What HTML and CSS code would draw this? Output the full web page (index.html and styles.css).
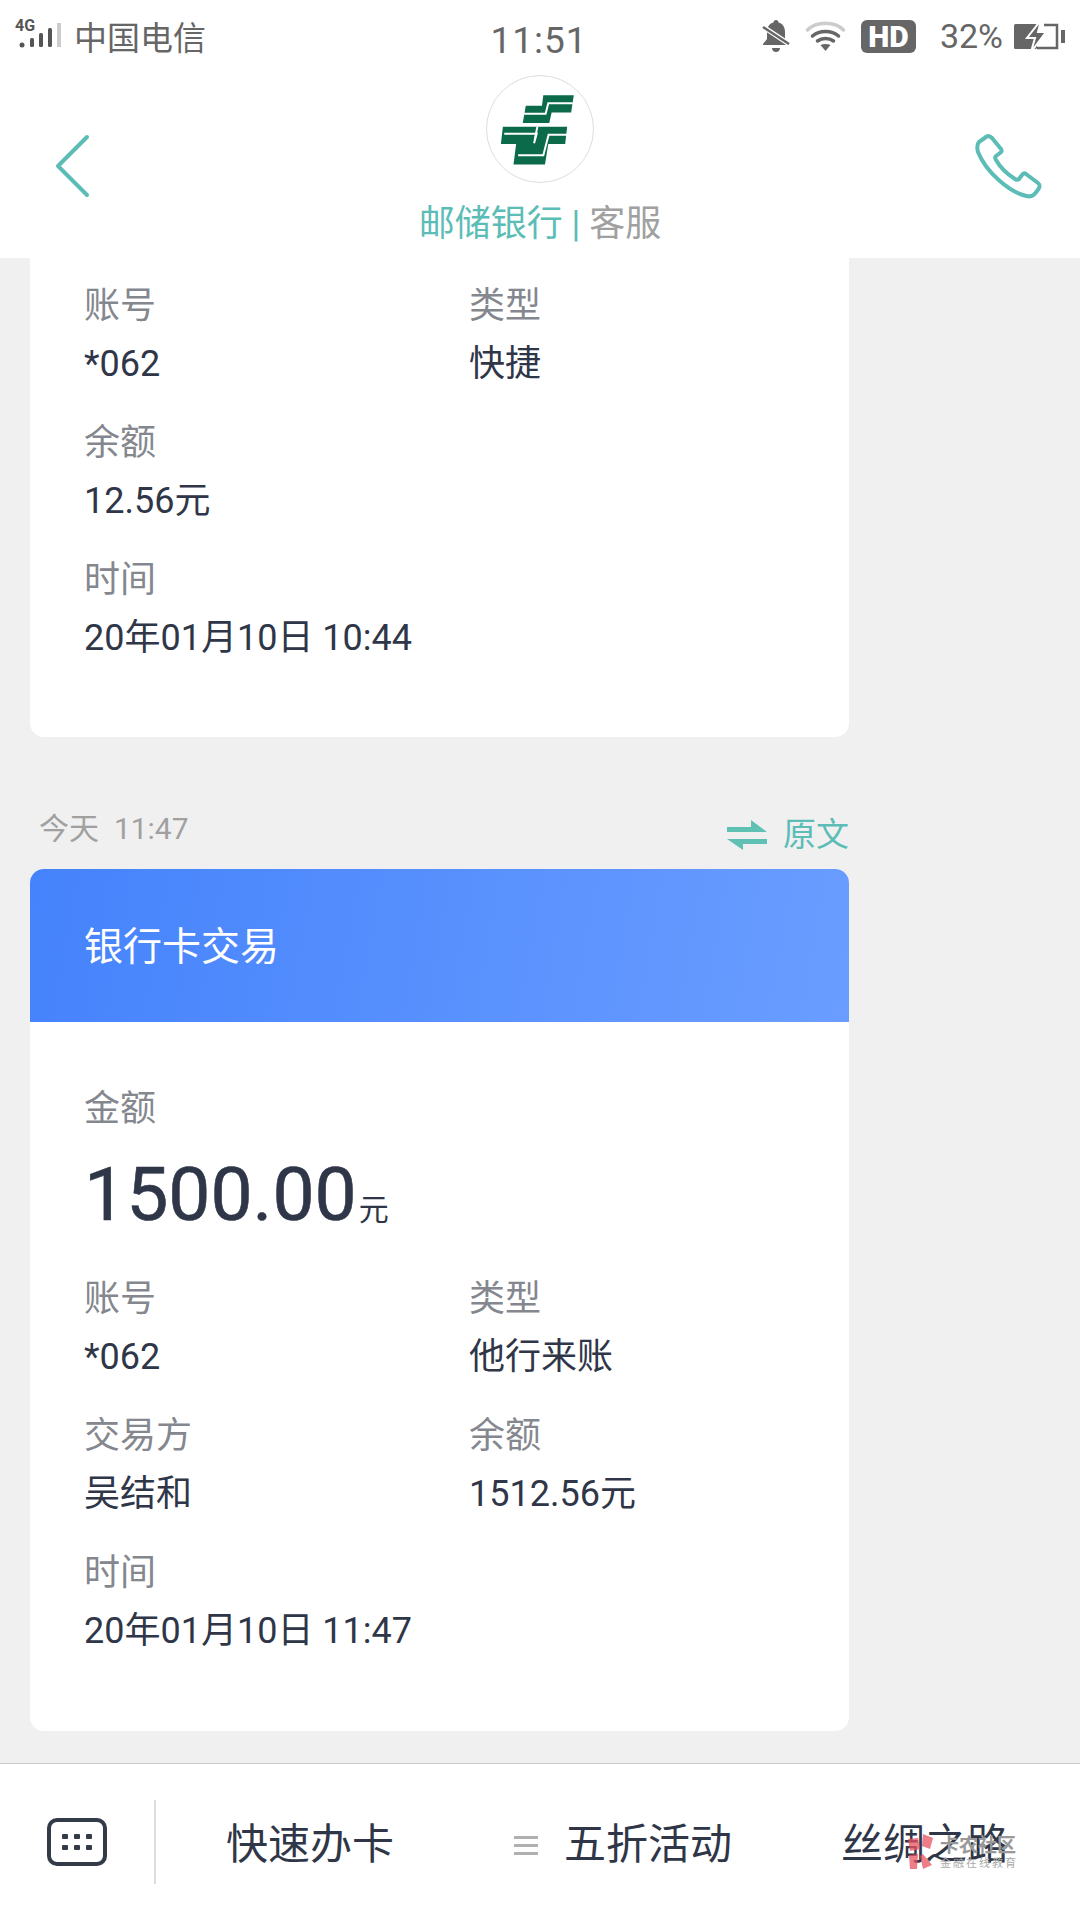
FILE: index.html
```html
<!DOCTYPE HTML>
<html>
<head>
  <meta name="viewport" content="width=device-width, initial-scale=1">
  <title>邮储银行 客服</title>
  <link rel="stylesheet" href="styles.css">
</head>
<body>
  <div class="status-bar">
    <div class="status-left">
      <div class="signal">
        <span class="signal-tag">4G</span>
        <svg width="48" height="30" viewBox="0 0 48 30">
          <circle cx="8" cy="24" r="2.500" fill="#555"/>
          <rect x="16" y="17" width="4" height="9" rx="1.500" fill="#555"/>
          <rect x="25" y="12" width="4" height="14" rx="1.500" fill="#555"/>
          <rect x="34" y="7" width="4" height="19" rx="1.500" fill="#555"/>
          <rect x="43" y="2" width="4" height="24" fill="#ccc"/>
        </svg>
      </div>
      <span class="carrier">中国电信</span>
    </div>
    <div class="clock">11:51</div>
    <div class="status-right">
      <svg class="bell" width="28" height="34" viewBox="0 0 28 34">
        <path d="M14 1c1.500 0 2.500 1 2.500 2.500 4.500 1.200 6.500 4.800 6.500 9.500v7l4 5v1H1v-1l4-5v-7c0-4.700 2-8.300 6.500-9.500C11.500 2 12.500 1 14 1z" fill="#666"/>
        <path d="M10 29h8c0 2.500-1.800 4-4 4s-4-1.500-4-4z" fill="#666"/>
        <path d="M0 7l27 18" stroke="#fff" stroke-width="5"/>
        <path d="M1 8l26 17" stroke="#666" stroke-width="2.500"/>
      </svg>
      <svg class="wifi" width="41" height="32" viewBox="0 0 40 32">
        <path d="M2 10C11 1 29 1 38 10" stroke="#ccc" stroke-width="3.500" fill="none" stroke-linecap="round"/>
        <path d="M7 16c7-6 19-6 26 0" stroke="#666" stroke-width="3.500" fill="none" stroke-linecap="round"/>
        <path d="M12 21c4.500-3.500 11.500-3.500 16 0" stroke="#666" stroke-width="3.500" fill="none" stroke-linecap="round"/>
        <path d="M15 25c3-1.500 7-1.500 10 0l-5 6z" fill="#666"/>
      </svg>
      <span class="hd">HD</span>
      <span class="battery-pct">32%</span>
      <svg class="battery" width="52" height="32" viewBox="0 0 52 32">
        <rect x="0" y="4" width="23" height="25" rx="1.500" fill="#666"/>
        <path d="M27 0L13 18h8l-4 14 15-20h-8z" fill="#666" stroke="#fff" stroke-width="2"/>
        <path d="M30 5h13v23H23" stroke="#666" stroke-width="2.500" fill="none"/>
        <rect x="47" y="10" width="4" height="13" fill="#666"/>
      </svg>
    </div>
  </div>

  <div class="top-bar">
    <svg class="back" width="36" height="64" viewBox="0 0 36 64">
      <path d="M33 3L4 32l29 29" stroke="#5bbdb6" stroke-width="4" fill="none" stroke-linecap="round" stroke-linejoin="round"/>
    </svg>
    <div class="account">
      <div class="logo">
        <svg width="106" height="106" viewBox="20 15 320 320">
          <path d="M190 73H282L274 125H215L208 157H128L137 105H186z" fill="#0a6a4a"/>
          <path d="M68 168H262L256 220H205L195 282H100L108 220H62z" fill="#0a6a4a"/>
          <g stroke="#fff" stroke-width="6" fill="none">
            <path d="M279 97H205L197 129H132"/>
            <path d="M262 192H206L190 254H114"/>
            <path d="M72 189H170L162 218"/>
            <path d="M172 168L164 208"/>
          </g>
        </svg>
      </div>
      <div class="account-name"><span class="bank">邮储银行 | </span>客服</div>
    </div>
    <svg class="phone" width="68" height="70" viewBox="0 0 68 70">
      <path d="M12 3c2-1.500 4-1 6 1l9 11c1 1.500 1 3-1 4l-4 3c-1 1-1 2.500 0 4 4 7 11 14 19 19 1.500 1 3 1 4 0l3-4c1-1.500 2.500-2 4-1l12 9c2 1.500 2 4 .5 6l-3 4c-2 3-5 4-9 3C35 58 12 38 4 18 3 14 3 10 5 8z" stroke="#5bbdb6" stroke-width="4" fill="none" stroke-linejoin="round"/>
    </svg>
  </div>

  <div class="feed">
    <div class="card first">
      <div class="fields">
        <div class="field"><div class="label">账号</div><div class="value">*062</div></div>
        <div class="field"><div class="label">类型</div><div class="value">快捷</div></div>
        <div class="field"><div class="label">余额</div><div class="value">12.56元</div></div>
        <div class="field"></div>
        <div class="field wide"><div class="label">时间</div><div class="value">20年01月10日 10:44</div></div>
      </div>
    </div>

    <div class="meta">
      <span class="when">今天&nbsp;&nbsp;11:47</span>
      <span class="origin">
        <svg width="40" height="30" viewBox="0 0 40 30">
          <path d="M0 7h24V0l16 12H0zM0 19h40v5H16v6z" fill="#5fc0b4"/>
        </svg>
        原文
      </span>
    </div>

    <div class="card">
      <div class="card-head">银行卡交易</div>
      <div class="card-body">
        <div class="label">金额</div>
        <div class="amount">1500.00<span class="unit">元</span></div>
        <div class="fields">
          <div class="field"><div class="label">账号</div><div class="value">*062</div></div>
          <div class="field"><div class="label">类型</div><div class="value">他行来账</div></div>
          <div class="field"><div class="label">交易方</div><div class="value">吴结和</div></div>
          <div class="field"><div class="label">余额</div><div class="value">1512.56元</div></div>
          <div class="field wide"><div class="label">时间</div><div class="value">20年01月10日 11:47</div></div>
        </div>
      </div>
    </div>
  </div>

  <div class="bottom-bar">
    <div class="keyboard">
      <svg width="60" height="48" viewBox="0 0 60 48">
        <rect x="2" y="2" width="56" height="44" rx="8" stroke="#333a48" stroke-width="4" fill="none"/>
        <g fill="#333a48">
          <rect x="15" y="16" width="6" height="5" rx="1"/><rect x="27" y="16" width="6" height="5" rx="1"/><rect x="39" y="16" width="6" height="5" rx="1"/>
          <rect x="15" y="27" width="6" height="5" rx="1"/><rect x="27" y="27" width="6" height="5" rx="1"/><rect x="39" y="27" width="6" height="5" rx="1"/>
        </g>
      </svg>
    </div>
    <div class="menu-item one">快速办卡</div>
    <div class="menu-item two"><span class="bars"></span>五折活动</div>
    <div class="menu-item three">丝绸之路</div>
    <div class="watermark">
      <svg width="32" height="36" viewBox="0 0 28 36">
        <g fill="#e8525f" opacity="0.75">
          <path d="M2 6l10-1 2 11-10 2z"/><path d="M17 1l10 4-3 11-8-3z"/><path d="M17 21l9 11-9 4-3-13z"/><path d="M3 22l9-1-1 15H4z"/>
        </g>
      </svg>
      <div class="mark-text">
        <div class="mark-big">卡农社区</div>
        <div class="mark-small">金融在线教育</div>
      </div>
    </div>
  </div>
</body>
</html>
```

FILE: styles.css
```css
body {
  font-family: Roboto, "Noto Sans CJK SC", sans-serif;
  margin: 0;
  width: 1080px;
  height: 1920px;
  overflow: hidden;
  display: flex;
  flex-direction: column;
  position: relative;
  background-color: #f0f0f0;
  color: #2f3648;
}

.status-bar {
  height: 72px;
  flex: none;
  display: grid;
  grid-template-columns: 1fr auto 1fr;
  align-items: center;
  padding: 0 14px;
  background-color: white;
  color: #666;
}

.status-left {
  display: flex;
  align-items: center;
}

.signal {
  position: relative;
  width: 48px;
  height: 30px;
}

.signal svg {
  position: absolute;
  left: 0;
  top: 0;
}

.signal-tag {
  position: absolute;
  left: 1px;
  top: -3px;
  font-size: 16px;
  line-height: 16px;
  font-weight: bold;
  color: #555;
}

.carrier {
  font-size: 33px;
  margin-left: 12px;
}

.clock {
  font-size: 37px;
  letter-spacing: 1px;
  padding-top: 8px;
  margin-left: -2px;
}

.status-right {
  display: flex;
  align-items: center;
  justify-content: flex-end;
}

.wifi {
  margin-left: 15px;
}

.hd {
  margin-left: 15px;
  width: 55px;
  height: 33px;
  line-height: 33px;
  text-align: center;
  font-size: 30px;
  font-weight: 900;
  color: white;
  background-color: #666;
  border-radius: 6px;
}

.battery-pct {
  font-size: 34px;
  margin-left: 24px;
}

.battery {
  margin-left: 11px;
}

.top-bar {
  height: 186px;
  flex: none;
  display: flex;
  justify-content: space-between;
  align-items: flex-start;
  padding: 0 38px 0 54px;
  background-color: white;
}

.back {
  margin-top: 62px;
}

.phone {
  margin-top: 62px;
}

.account {
  display: flex;
  flex-direction: column;
  align-items: center;
  margin-left: 16px;
  padding-top: 3px;
}

.logo {
  width: 106px;
  height: 106px;
  border: 1px solid #ddd;
  border-radius: 50%;
  display: flex;
  align-items: center;
  justify-content: center;
}

.account-name {
  font-size: 36px;
  line-height: 50px;
  margin-top: 16px;
  color: #a0a0a0;
}

.bank {
  color: #5bbdb6;
}

.feed {
  flex: 1;
  padding: 0 231px 0 30px;
}

.card {
  background-color: white;
  border-radius: 14px;
  overflow: hidden;
}

.card.first {
  border-radius: 0 0 14px 14px;
  padding: 19px 54px 70px;
}

.fields {
  display: grid;
  grid-template-columns: 385px 1fr;
  row-gap: 21px;
}

.field.wide {
  grid-column: 1 / 3;
}

.label {
  font-size: 36px;
  line-height: 58px;
  color: #85878f;
}

.value {
  font-size: 36px;
  line-height: 58px;
}

.meta {
  display: flex;
  justify-content: space-between;
  align-items: flex-end;
  height: 132px;
  padding: 0 0 12px 9px;
  box-sizing: border-box;
}

.when {
  font-size: 30px;
  line-height: 44px;
  padding-bottom: 6px;
  color: #a0a0a0;
}

.origin {
  display: flex;
  align-items: center;
  gap: 16px;
  font-size: 33px;
  line-height: 44px;
  color: #5bbdb6;
}

.card-head {
  height: 153px;
  line-height: 157px;
  padding-left: 54px;
  font-size: 39px;
  color: white;
  background: linear-gradient(100deg, #4583fc, #6a9dff);
}

.card-body {
  padding: 58px 54px 71px;
}

.amount {
  font-size: 75px;
  line-height: 112px;
  margin-bottom: 4px;
  -webkit-text-stroke: 0.6px #2f3648;
}

.unit {
  font-size: 30px;
  margin-left: 2px;
  -webkit-text-stroke: 0;
}

.bottom-bar {
  height: 156px;
  flex: none;
  display: flex;
  align-items: center;
  position: relative;
  background-color: white;
  border-top: 1px solid #ccc;
}

.keyboard {
  width: 156px;
  height: 84px;
  flex: none;
  display: flex;
  align-items: center;
  justify-content: center;
  box-sizing: border-box;
  border-right: 2px solid #ddd;
}

.menu-item {
  font-size: 42px;
  line-height: 60px;
  margin-top: 6px;
  display: flex;
  align-items: center;
}

.menu-item.one {
  margin-left: 70px;
}

.menu-item.two {
  margin-left: 120px;
}

.menu-item.three {
  margin-left: 109px;
}

.bars {
  width: 24px;
  height: 3px;
  margin-right: 26px;
  background-color: #b0b0b0;
  box-shadow: 0 -8px #b0b0b0, 0 8px #b0b0b0;
}

.watermark {
  position: absolute;
  left: 904px;
  top: 69px;
  display: flex;
  gap: 4px;
}

.mark-big {
  font-size: 19px;
  line-height: 22px;
  font-weight: bold;
  margin-top: 2px;
  color: #999;
}

.mark-small {
  font-size: 11px;
  line-height: 14px;
  letter-spacing: 2px;
  color: #aaa;
}
```
